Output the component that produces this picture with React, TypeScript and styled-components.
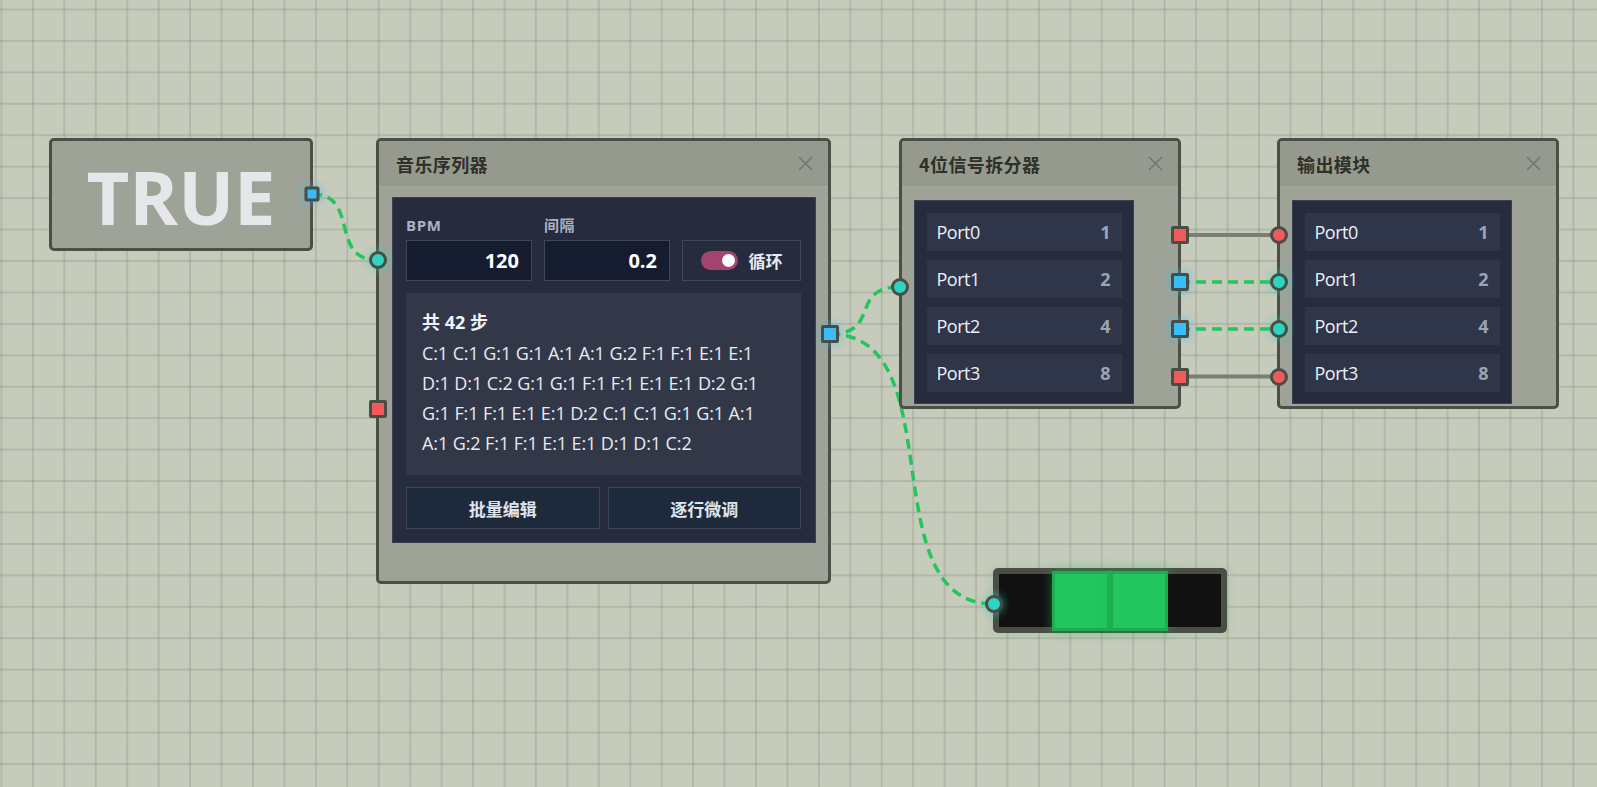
import React from "react";
import styled, { createGlobalStyle, css } from "styled-components";

const Global = createGlobalStyle`
  html, body { margin: 0; padding: 0; overflow: hidden; }
  body { font-family: "Open Sans", "Noto Sans CJK SC", sans-serif; }
`;

const Canvas = styled.div`
  position: relative;
  width: 1597px;
  height: 787px;
  background-color: #c6cbbc;
  background-image:
    linear-gradient(to right, rgba(120, 128, 110, 0.25) 2px, transparent 2px),
    linear-gradient(to bottom, rgba(120, 128, 110, 0.25) 2px, transparent 2px);
  background-size: 31.45px 31.45px;
  background-position: 0.5px 8.5px;
  overflow: hidden;
`;

const WireLayer = styled.svg`
  position: absolute;
  inset: 0;
  width: 100%;
  height: 100%;
  pointer-events: none;
  z-index: 1;
`;

const NodeBox = styled.div<{ $x: number; $y: number; $w: number; $h: number }>`
  position: absolute;
  left: ${(p) => p.$x}px;
  top: ${(p) => p.$y}px;
  width: ${(p) => p.$w}px;
  height: ${(p) => p.$h}px;
  box-sizing: border-box;
  border: 3px solid #4b4f45;
  border-radius: 5px;
  background: #9fa397;
  display: flex;
  flex-direction: column;
  z-index: 2;
`;

const Header = styled.div`
  height: 46px;
  flex: none;
  box-sizing: border-box;
  background: #969a8e;
  border-bottom: 1px solid #a6aa9e;
  border-radius: 2px 2px 0 0;
  display: flex;
  align-items: center;
  justify-content: space-between;
  padding: 0 15px 0 17px;
`;

const Title = styled.div`
  font-family: "Noto Sans CJK SC", sans-serif;
  font-weight: 700;
  font-size: 18px;
  color: #2e3029;
  letter-spacing: 0.4px;
`;

const CloseBtn = styled.div`
  width: 15px;
  height: 15px;
  display: flex;
  align-items: center;
  justify-content: center;
`;

const Panel = styled.div<{ $m: string }>`
  margin: ${(p) => p.$m};
  background: #262b3d;
  box-sizing: border-box;
  border: 1px solid #3a4053;
`;

const SeqPanel = styled(Panel)`
  padding: 18px 13.5px 13px 13.5px;
  display: flex;
  flex-direction: column;
`;

const FieldRow = styled.div`
  display: grid;
  grid-template-columns: 126px 126px 1fr;
  gap: 12px;
  align-items: end;
`;

const Field = styled.div`
  display: flex;
  flex-direction: column;
  gap: 6px;
`;

const Label = styled.div`
  font-family: "Open Sans", "Noto Sans CJK SC", sans-serif;
  font-weight: 700;
  font-size: 15px;
  color: #aab3c8;
  line-height: 18px;
  letter-spacing: 0.6px;
`;

const ValueBox = styled.div`
  height: 41px;
  box-sizing: border-box;
  background: #161c2f;
  border: 1px solid #3f4859;
  display: flex;
  align-items: center;
  justify-content: flex-end;
  padding-right: 12px;
  font-family: "Open Sans", sans-serif;
  font-weight: 700;
  font-size: 20px;
  color: #ffffff;
`;

const ToggleBox = styled.div`
  height: 41px;
  box-sizing: border-box;
  border: 1px solid #3f4859;
  display: flex;
  align-items: center;
  justify-content: center;
  gap: 11px;
  font-family: "Noto Sans CJK SC", sans-serif;
  font-weight: 700;
  font-size: 17px;
  color: #e6e9f0;
`;

const Switch = styled.div<{ $on: boolean }>`
  width: 37px;
  height: 19px;
  border-radius: 10px;
  background: ${(p) => (p.$on ? "#a3446f" : "#555")};
  position: relative;
  &::after {
    content: "";
    position: absolute;
    top: 3px;
    left: ${(p) => (p.$on ? "21px" : "3px")};
    width: 13px;
    height: 13px;
    border-radius: 50%;
    background: #fff;
  }
`;

const Notes = styled.div`
  margin-top: 12px;
  background: #323848;
  padding: 16px 16px 0 16px;
  height: 182px;
  box-sizing: border-box;
`;

const StepCount = styled.div`
  font-family: "Open Sans", "Noto Sans CJK SC", sans-serif;
  font-weight: 700;
  font-size: 18px;
  color: #f1f3f7;
  line-height: 26px;
  margin-bottom: 3px;
`;

const NoteLine = styled.div`
  font-family: "Open Sans", sans-serif;
  font-size: 18px;
  color: #e8ebf2;
  line-height: 30px;
  letter-spacing: -0.1px;
  white-space: nowrap;
`;

const ButtonRow = styled.div`
  margin-top: 12px;
  display: grid;
  grid-template-columns: 1fr 1fr;
  gap: 8px;
`;

const Button = styled.div`
  height: 42px;
  box-sizing: border-box;
  background: #1f293c;
  border: 1px solid #3a4659;
  display: flex;
  align-items: center;
  justify-content: center;
  font-family: "Noto Sans CJK SC", sans-serif;
  font-weight: 700;
  font-size: 17px;
  color: #dfe4ee;
`;

const PortList = styled(Panel)`
  padding: 11.5px 11.5px 11px 11.5px;
  display: flex;
  flex-direction: column;
  gap: 9px;
`;

const PortRow = styled.div`
  height: 38px;
  background: #30364a;
  display: flex;
  align-items: center;
  justify-content: space-between;
  padding: 0 11px 0 10px;
`;

const PortName = styled.span`
  font-family: "Open Sans", sans-serif;
  font-size: 18px;
  color: #eef0f5;
  letter-spacing: -0.5px;
`;

const PortValue = styled.span`
  font-family: "Open Sans", sans-serif;
  font-weight: 700;
  font-size: 18px;
  color: #9ca3b2;
`;

const BigValue = styled.div`
  flex: 1;
  display: flex;
  align-items: center;
  justify-content: center;
  font-family: "Open Sans", sans-serif;
  font-weight: 700;
  font-size: 74px;
  color: #e6e7eb;
  padding-top: 4px;
`;

const portColors = {
  blue: "#38bdf8",
  teal: "#2dd4bf",
  red: "#f05a5a",
};

type PortKind = keyof typeof portColors;

const Port = styled.div<{ $x: number; $y: number; $kind: PortKind; $round?: boolean; $glow?: boolean; $size?: number }>`
  position: absolute;
  left: ${(p) => p.$x}px;
  top: ${(p) => p.$y}px;
  width: ${(p) => p.$size ?? 18}px;
  height: ${(p) => p.$size ?? 18}px;
  transform: translate(-50%, -50%);
  box-sizing: border-box;
  background: ${(p) => portColors[p.$kind]};
  border: 3px solid #4a4d46;
  border-radius: ${(p) => (p.$round ? "50%" : "2px")};
  z-index: 4;
  ${(p) =>
    p.$glow &&
    css`
      box-shadow: 0 0 7px 2px ${portColors[p.$kind]}66;
    `}
`;

const Display = styled.div<{ $x: number; $y: number }>`
  position: absolute;
  left: ${(p) => p.$x}px;
  top: ${(p) => p.$y}px;
  width: 234px;
  height: 65px;
  box-sizing: border-box;
  border: 6px solid #4a4e45;
  border-radius: 5px;
  background: #111111;
  display: grid;
  grid-template-columns: 53px 58px 58px 1fr;
  z-index: 2;
  box-shadow: 0 0 10px rgba(34, 197, 94, 0.22);
`;

const Segment = styled.div<{ $on: boolean }>`
  box-sizing: border-box;
  ${(p) =>
    p.$on
      ? css`
          background: #22c55e;
          border: 3px solid #1fab50;
          margin: -3.5px 0;
          box-shadow: 0 0 10px rgba(34, 197, 94, 0.5);
        `
      : css`
          background: #111111;
        `}
`;

const CloseIcon = () => (
  <svg width="15" height="15" viewBox="0 0 15 15">
    <path d="M1 1 L14 14 M14 1 L1 14" stroke="#6d7268" strokeWidth="1.3" fill="none" />
  </svg>
);

const NodeHeader = ({ title }: { title: string }) => (
  <Header>
    <Title>{title}</Title>
    <CloseBtn>
      <CloseIcon />
    </CloseBtn>
  </Header>
);

const noteLines = [
  "C:1 C:1 G:1 G:1 A:1 A:1 G:2 F:1 F:1 E:1 E:1",
  "D:1 D:1 C:2 G:1 G:1 F:1 F:1 E:1 E:1 D:2 G:1",
  "G:1 F:1 F:1 E:1 E:1 D:2 C:1 C:1 G:1 G:1 A:1",
  "A:1 G:2 F:1 F:1 E:1 E:1 D:1 D:1 C:2",
];

const ports = [
  { name: "Port0", v: 1 },
  { name: "Port1", v: 2 },
  { name: "Port2", v: 4 },
  { name: "Port3", v: 8 },
];

const PortPanel = () => (
  <PortList $m="13px 44px 2px 12px">
    {ports.map((p) => (
      <PortRow key={p.name}>
        <PortName>{p.name}</PortName>
        <PortValue>{p.v}</PortValue>
      </PortRow>
    ))}
  </PortList>
);

const green = "#22c55e";
const rowY = [235, 282, 329, 376.5];

const bez = (x1: number, y1: number, x2: number, y2: number, k: number) =>
  `M${x1} ${y1} C ${x1 + k} ${y1}, ${x2 - k} ${y2}, ${x2} ${y2}`;

export default function App() {
  return (
    <Canvas>
      <Global />
      <WireLayer viewBox="0 0 1597 787">
        <g fill="none" stroke={green} strokeWidth="3.5" strokeDasharray="10 6">
          <path d={bez(312, 194, 377, 260, 48)} />
          <path d={bez(830, 334, 900, 287, 52)} />
          <path d={bez(830, 334, 994, 604, 125)} />
          <path d={`M1180 ${rowY[1]} L1278 ${rowY[1]}`} />
          <path d={`M1180 ${rowY[2]} L1278 ${rowY[2]}`} />
        </g>
        <g fill="none" stroke="#7b7f72" strokeWidth="4">
          <path d={`M1180 ${rowY[0]} L1278 ${rowY[0]}`} />
          <path d={`M1180 ${rowY[3]} L1278 ${rowY[3]}`} />
        </g>
      </WireLayer>

      <NodeBox $x={49} $y={138} $w={264} $h={113}>
        <BigValue>TRUE</BigValue>
      </NodeBox>
      <Port $x={312} $y={194} $kind="blue" $glow $size={15} />

      <NodeBox $x={376} $y={138} $w={455} $h={446}>
        <NodeHeader title="音乐序列器" />
        <SeqPanel $m="10px 12.5px 0 12.5px">
          <FieldRow>
            <Field>
              <Label>BPM</Label>
              <ValueBox>120</ValueBox>
            </Field>
            <Field>
              <Label>间隔</Label>
              <ValueBox>0.2</ValueBox>
            </Field>
            <ToggleBox>
              <Switch $on />
              循环
            </ToggleBox>
          </FieldRow>
          <Notes>
            <StepCount>共 42 步</StepCount>
            {noteLines.map((l) => (
              <NoteLine key={l}>{l}</NoteLine>
            ))}
          </Notes>
          <ButtonRow>
            <Button>批量编辑</Button>
            <Button>逐行微调</Button>
          </ButtonRow>
        </SeqPanel>
      </NodeBox>
      <Port $x={377.5} $y={260} $kind="teal" $round $glow />
      <Port $x={377.5} $y={409} $kind="red" />
      <Port $x={830} $y={334} $kind="blue" $glow />

      <NodeBox $x={899} $y={138} $w={282} $h={271}>
        <NodeHeader title="4位信号拆分器" />
        <PortPanel />
      </NodeBox>
      <Port $x={900} $y={287} $kind="teal" $round />
      <Port $x={1179.5} $y={rowY[0]} $kind="red" />
      <Port $x={1179.5} $y={rowY[1]} $kind="blue" $glow />
      <Port $x={1179.5} $y={rowY[2]} $kind="blue" $glow />
      <Port $x={1179.5} $y={rowY[3]} $kind="red" />

      <NodeBox $x={1277} $y={138} $w={282} $h={271}>
        <NodeHeader title="输出模块" />
        <PortPanel />
      </NodeBox>
      <Port $x={1278.5} $y={rowY[0]} $kind="red" $round />
      <Port $x={1278.5} $y={rowY[1]} $kind="teal" $round $glow />
      <Port $x={1278.5} $y={rowY[2]} $kind="teal" $round $glow />
      <Port $x={1278.5} $y={rowY[3]} $kind="red" $round />

      <Display $x={993} $y={568}>
        <Segment $on={false} />
        <Segment $on />
        <Segment $on />
        <Segment $on={false} />
      </Display>
      <Port $x={994} $y={604} $kind="teal" $round $glow />
    </Canvas>
  );
}
